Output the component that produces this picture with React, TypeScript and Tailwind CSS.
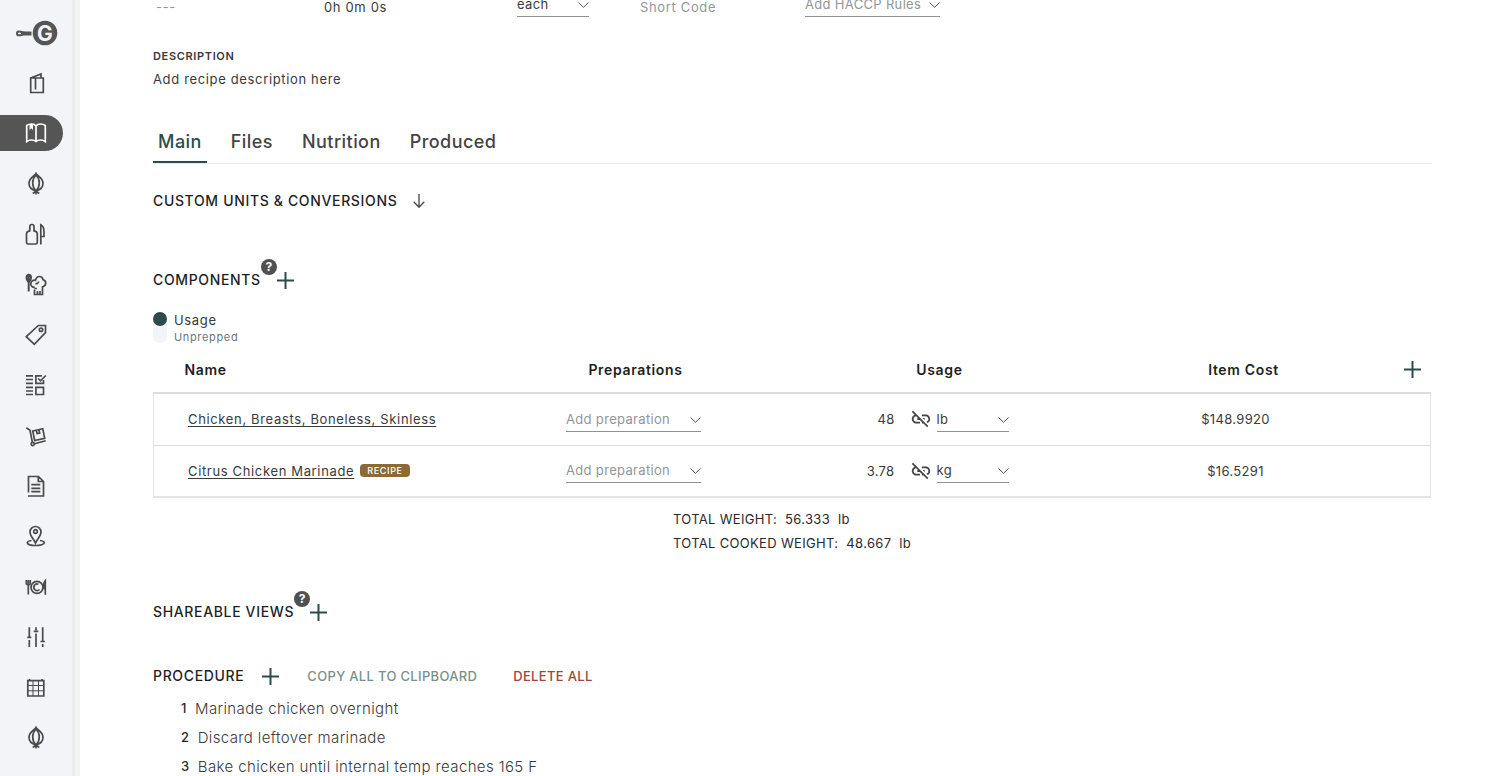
import React from "react";
import { MdLinkOff } from "react-icons/md";

interface NavItem {
  label: string;
  icon: React.ReactNode;
}

interface Component {
  id: number;
  name: string;
  isRecipe: boolean;
  amount: string;
  unit: string;
  cost: string;
}

const onion = (
  <>
    <path d="M12 1.5C11 4 5 5.5 5 11.3c0 4 3 6.700 7 7.700 4-1 7-3.700 7-7.700 0-5.800-6-7.300-7-9.800z" />
    <path d="M12 3C9.500 5.500 8.700 8.500 8.700 11s1.300 6 3.300 8c2-2 3.300-5.500 3.300-8S14.500 5.500 12 3z" />
    <path d="M12 18.5v4M8.800 21.500l3.200-2.500 3.200 2.500" />
  </>
);

const navItems: NavItem[] = [
  {
    label: "Menus",
    icon: <path d="M6.7 7h12.6v14.5H6.7zM6.7 7L17 3v4M11.5 7.5v11" />,
  },
  {
    label: "Recipes",
    icon: (
      <>
        <path d="M12 5c-1-1.5-2.500-2-4.500-2S4 3.500 2.700 4.500v16C4 19.500 5.500 19 7.500 19s3.500.5 4.500 1.500c1-1 2.500-1.500 4.500-1.500s3.500.5 4.800 1.500v-16C20 3.500 18.500 3 16.500 3S13 3.500 12 5zM12 5v15" />
        <path d="M5.500 3H9v6L7.250 7.300 5.500 9z" fill="currentColor" stroke="none" />
      </>
    ),
  },
  { label: "Ingredients", icon: onion },
  {
    label: "Preparations",
    icon: (
      <>
        <path d="M5.800 8.800V4.600a2.100 2.100 0 0 1 4.200 0v4.200c2 .4 3.300 1.400 3.300 3v8.700a1.500 1.500 0 0 1-1.500 1.500H4a1.500 1.500 0 0 1-1.500-1.500v-8.700c0-1.600 1.300-2.600 3.300-3z" />
        <path d="M16.800 22.500V2.800c2.600 1.200 3.200 4.200 3.200 7.200v4.500h-3.200" />
      </>
    ),
  },
  {
    label: "Kitchen",
    icon: (
      <>
        <path
          d="M4.700 1.800c1.500 0 2.300 1.200 2.300 2.700S5.900 8.500 4.700 9C3.500 8.500 2.500 6 2.500 4.500s.8-2.700 2.200-2.700zM4.700 2v16.500"
          strokeWidth="2"
        />
        <path d="M10.800 14.300a3.600 3.600 0 1 1 .7-7c.6-2.500 2.200-3.800 4-3.800 2 0 3.300 1.300 3.700 3.300 1.500.2 2.500 1.500 2.500 3.200 0 2.200-1.600 3.400-3.200 3.800v7.700h-8v-5" />
        <path d="M10.500 15.500H13M13.500 21v-3M16 21v-3M11.500 10.500c1.500.5 3-.5 3.200-2" />
      </>
    ),
  },
  {
    label: "Pricing",
    icon: (
      <>
        <path d="M2.300 13.700L14.300 2.500h7.200v7.200L10.300 21.300z" />
        <circle cx="17" cy="6.700" r="1.700" />
      </>
    ),
  },
  {
    label: "Checklists",
    icon: (
      <path d="M2 2.800h7M2 6.500h7M2 10.300h7M2 14.300h7M2 18h7M2 21.500h7M19.500 7v3.300h-7.600V2.800h6M14.200 5.500l2.300 2.300 5.300-5.300M11.900 14.300h7.600v7.200h-7.600z" />
    ),
  },
  {
    label: "Orders",
    icon: (
      <>
        <path d="M2.300 3.800L6 6.300l2.400 12M10.500 19.700l11.200-3M8.700 7l10-2.300 2 9.700-10 2.100zM12.300 6.300l.8 3.300 2.600-.6-.8-3.300" />
        <circle cx="8.700" cy="20" r="1.600" />
      </>
    ),
  },
  {
    label: "Reports",
    icon: (
      <path d="M4.500 18.500v-16h10l5 5V22H4M14.300 2.500v5h5M7.300 10.700h9M7.300 14.300h9M7.300 17.700h9" />
    ),
  },
  {
    label: "Locations",
    icon: (
      <>
        <path d="M11.500 19c-2-4-5.500-7.300-5.500-11a5.500 5.500 0 0 1 11 0c0 3.700-3.500 7-5.500 11z" />
        <circle cx="11.500" cy="7.500" r="1.800" />
        <path d="M7.500 16.500c-2.500.4-4.200 1.200-4.200 2.200 0 1.600 3.800 2.800 8.400 2.800s8.600-1.200 8.600-2.800c0-1-1.700-1.800-4.300-2.200" />
      </>
    ),
  },
  {
    label: "Catering",
    icon: (
      <>
        <circle cx="13" cy="12.300" r="6" />
        <path d="M15.500 14.500a3.300 3.300 0 1 1-1-5.300M2.300 5v4.500M4.300 5v14.500M6.300 5v4.500M2.300 9.500h4M21.300 19.800V5.500c-1.500 1.500-1.800 5-1.500 8h1.500" />
      </>
    ),
  },
  {
    label: "Settings",
    icon: (
      <path d="M5.300 2.300v10M3.300 12.300h4M5.300 15v7M12 2.300v3M9.700 6.300h4.600M12 8.500V22M18.700 2.300v14M16.500 16.500h4.400M18.700 19v3" />
    ),
  },
  {
    label: "Calendar",
    icon: (
      <>
        <path d="M3.800 4.600h16V20h-16zM5.500 3v2M18 3v2" />
        <path d="M3.800 9.500h16M3.800 14.800h16M9 5v15M14.500 5v15" strokeWidth="1" />
      </>
    ),
  },
  { label: "Produce", icon: onion },
];

const components: Component[] = [
  {
    id: 1,
    name: "Chicken, Breasts, Boneless, Skinless",
    isRecipe: false,
    amount: "48",
    unit: "lb",
    cost: "$148.9920",
  },
  {
    id: 2,
    name: "Citrus Chicken Marinade",
    isRecipe: true,
    amount: "3.78",
    unit: "kg",
    cost: "$16.5291",
  },
];

const steps = [
  "Marinade chicken overnight",
  "Discard leftover marinade",
  "Bake chicken until internal temp reaches 165 F",
];

const tabs = ["Main", "Files", "Nutrition", "Produced"];

function Logo() {
  return (
    <svg className="h-7 w-11" viewBox="0 0 44 28" aria-label="Home">
      <path
        d="M2.500 11.500c3 0 4 1 7 1h6v4h-6c-3 0-4 .8-7 .8C.8 17.300 0 16 0 14.400s.8-2.900 2.500-2.900z"
        fill="#555"
      />
      <ellipse cx="3.500" cy="14.400" rx="1.500" ry=".9" fill="#f3f4f8" />
      <circle cx="29" cy="14" r="12.300" fill="#555" />
      <text
        x="29"
        y="21.500"
        textAnchor="middle"
        fontSize="21"
        fontWeight="700"
        letterSpacing="0"
        fill="#f3f4f8"
        className="font-['Inter',sans-serif]"
      >
        G
      </text>
    </svg>
  );
}

function PlusButton({ label }: { label: string }) {
  return (
    <button aria-label={label} className="flex shrink-0 text-[#2c4c4c]">
      <svg
        className="h-[17px] w-[17px]"
        viewBox="0 0 17 17"
        stroke="currentColor"
        strokeWidth="2"
      >
        <path d="M8.500 0v17M0 8.500h17" />
      </svg>
    </button>
  );
}

function HelpButton({ label }: { label: string }) {
  return (
    <button
      aria-label={label}
      className="mb-[26px] h-4 w-4 rounded-full bg-[#505050] text-center text-xs leading-4 font-bold tracking-normal text-white"
    >
      ?
    </button>
  );
}

interface DropdownProps {
  label: string;
  value: string;
  className: string;
}

function Dropdown({ label, value, className }: DropdownProps) {
  return (
    <div className={`relative ${className}`}>
      <select
        aria-label={label}
        defaultValue={value}
        className="h-[25px] w-full appearance-none border-b border-[#8f9295] bg-transparent text-[13px] tracking-wide outline-none"
      >
        <option>{value}</option>
      </select>
      <svg
        className="pointer-events-none absolute top-[10px] right-0 h-[6px] w-[11px] text-[#505050]"
        viewBox="0 0 11 6"
        fill="none"
        stroke="currentColor"
      >
        <path d="M.5.5l5 4.800 5-4.800" />
      </svg>
    </div>
  );
}

function Sidebar() {
  return (
    <aside className="flex h-full w-[75px] shrink-0 flex-col border-r-[3px] border-[#e9ebec] bg-[#f3f4f8] pb-5 shadow-[5px_0_0_#f2f4f4]">
      <a href="#home" className="flex h-[65px] shrink-0 items-center pl-4">
        <Logo />
      </a>
      <nav className="flex flex-1 flex-col justify-between">
        {navItems.map((item) => (
          <a
            key={item.label}
            href={`#${item.label.toLowerCase()}`}
            aria-label={item.label}
            className={`flex h-9 w-[63px] items-center rounded-r-full pl-6 ${
              item.label === "Recipes"
                ? "bg-[#555] text-white"
                : "text-[#4a4a4a]"
            }`}
          >
            <svg
              className="h-6 w-6"
              viewBox="0 0 24 24"
              fill="none"
              stroke="currentColor"
              strokeWidth="1.7"
            >
              {item.icon}
            </svg>
          </a>
        ))}
      </nav>
    </aside>
  );
}

function ComponentTable() {
  return (
    <table className="mt-[3px] w-full table-fixed border-collapse text-[13px]">
      <thead>
        <tr className="h-[46px] text-sm text-[#1f1f1f]">
          <th className="pl-[31px] text-left font-semibold">Name</th>
          <th className="w-[304px] font-semibold">Preparations</th>
          <th className="w-[304px] font-semibold">Usage</th>
          <th className="w-[304px] font-semibold">Item Cost</th>
          <th className="w-[35px]">
            <div className="flex pl-2">
              <PlusButton label="Add column" />
            </div>
          </th>
        </tr>
      </thead>
      <tbody className="border border-t-2 border-b-2 border-[#e4e4e4] border-t-[#d9d9d9]">
        {components.map((component) => (
          <tr
            key={component.id}
            className="h-[52px] border-t border-[#dcdcdc] first:border-t-2"
          >
            <td className="pl-[34px] whitespace-nowrap">
              <div className="flex items-center gap-[6px]">
                <a
                  href={`#component-${component.id}`}
                  className="underline underline-offset-2"
                >
                  {component.name}
                </a>
                {component.isRecipe && (
                  <span className="rounded bg-[#8c6a38] px-[7px] text-[9px] leading-[13px] font-medium text-white">
                    RECIPE
                  </span>
                )}
              </div>
            </td>
            <td>
              <div className="flex justify-center pr-1 text-[#929699]">
                <Dropdown
                  label="Preparation"
                  value="Add preparation"
                  className="w-[135px]"
                />
              </div>
            </td>
            <td>
              <div className="flex items-center justify-end pr-[83px]">
                <input
                  aria-label="Amount"
                  defaultValue={component.amount}
                  className="w-[60px] bg-transparent text-right tracking-wide outline-none"
                />
                <button aria-label="Unlink" className="mr-[5px] ml-[15px]">
                  <MdLinkOff className="h-[22px] w-[22px] text-[#444]" />
                </button>
                <Dropdown
                  label="Unit"
                  value={component.unit}
                  className="w-[72px]"
                />
              </div>
            </td>
            <td className="pr-4 text-center tracking-wide">{component.cost}</td>
            <td></td>
          </tr>
        ))}
      </tbody>
    </table>
  );
}

export default function App() {
  return (
    <div className="flex h-screen overflow-hidden bg-white font-['Inter',sans-serif] text-[13px] leading-5 tracking-wider text-[#3a3a3a]">
      <Sidebar />

      <main className="min-w-0 flex-1 overflow-hidden pr-[75px] pl-[78px]">
        <div className="-mt-2 grid h-[25px] grid-cols-[168px_193px_123px_165px_135px] items-end pl-[3px]">
          <span className="text-[#929699]">---</span>
          <span>0h 0m 0s</span>
          <Dropdown label="Yield unit" value="each" className="w-[72px]" />
          <input
            aria-label="Short Code"
            placeholder="Short Code"
            className="w-[100px] tracking-wider outline-none placeholder:text-[#929699]"
          />
          <div className="text-[#929699]">
            <Dropdown
              label="HACCP rules"
              value="Add HACCP Rules"
              className="w-[135px]"
            />
          </div>
        </div>

        <h3 className="mt-[31px] text-[11px] leading-4 font-semibold">
          DESCRIPTION
        </h3>
        <p className="mt-[5px]">Add recipe description here</p>

        <div
          role="tablist"
          className="mt-[30px] flex h-[45px] gap-[19px] border-b border-[#e6ebee]"
        >
          {tabs.map((tab) => (
            <button
              key={tab}
              role="tab"
              aria-selected={tab === "Main"}
              className={`border-b-2 px-[5px] pt-[3px] text-lg font-medium tracking-wide ${
                tab === "Main"
                  ? "border-[#2c4c4c] text-[#2c4c4c]"
                  : "border-transparent text-[#444]"
              }`}
            >
              {tab}
            </button>
          ))}
        </div>

        <section className="mt-[27px] flex h-5 items-center gap-4 text-[#1f1f1f]">
          <h2 className="text-sm font-medium">CUSTOM UNITS &amp; CONVERSIONS</h2>
          <button aria-label="Expand custom units">
            <svg
              className="h-[14px] w-3 text-[#444]"
              viewBox="0 0 12 14"
              fill="none"
              stroke="currentColor"
              strokeWidth="1.3"
            >
              <path d="M6 0v13M.7 7.700l5.300 5.500 5.300-5.500" />
            </svg>
          </button>
        </section>

        <section className="mt-[59px] flex h-5 items-center text-[#1f1f1f]">
          <h2 className="text-sm font-medium">COMPONENTS</h2>
          <HelpButton label="About components" />
          <PlusButton label="Add component" />
        </section>

        <div className="mt-[22px] flex h-8 gap-[7px]">
          <button
            role="switch"
            aria-checked="true"
            aria-label="Show usage"
            className="h-[31px] w-[14px] rounded-full bg-[#f3f4f8]"
          >
            <span className="mb-[17px] block h-[14px] w-[14px] rounded-full bg-[#2c4c4c]"></span>
          </button>
          <div>
            <p className="leading-4">Usage</p>
            <p className="text-[11px] leading-[18px] text-[#6b7678]">
              Unprepped
            </p>
          </div>
        </div>

        <ComponentTable />

        <div className="mt-[9px] flex justify-center tracking-wide whitespace-pre text-[#2a2a2a]">
          <div className="leading-6">
            <p>TOTAL WEIGHT:  56.333  lb</p>
            <p>TOTAL COOKED WEIGHT:  48.667  lb</p>
          </div>
        </div>

        <section className="mt-[47px] flex h-5 items-center text-[#1f1f1f]">
          <h2 className="text-sm font-medium">SHAREABLE VIEWS</h2>
          <HelpButton label="About shareable views" />
          <PlusButton label="Add shareable view" />
        </section>

        <section className="mt-[44px] flex h-5 items-center text-[#1f1f1f]">
          <h2 className="mr-[18px] text-sm font-medium">PROCEDURE</h2>
          <PlusButton label="Add step" />
          <button className="ml-7 font-medium tracking-wide text-[#759189]">
            COPY ALL TO CLIPBOARD
          </button>
          <button className="ml-9 font-medium tracking-wide text-[#9c463c]">
            DELETE ALL
          </button>
        </section>

        <ol className="mt-2 pl-7">
          {steps.map((step, index) => (
            <li key={step} className="flex items-center gap-2 leading-[29px]">
              <span className="font-medium text-[#2a2a2a]">{index + 1}</span>
              <span className="text-[15px] font-light tracking-wide">
                {step}
              </span>
            </li>
          ))}
        </ol>
      </main>
    </div>
  );
}
